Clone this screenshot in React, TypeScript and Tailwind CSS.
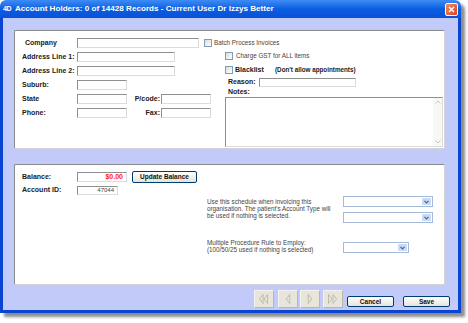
import React from 'react'

const font = { fontFamily: '"Liberation Sans", Arial, sans-serif' }

function Field({ w, h = 10, children, className = '' }: { w: number; h?: number; children?: React.ReactNode; className?: string }) {
  return (
    <div
      className={`bg-white border border-[#8f8f8f] border-r-[#dcdcdc] border-b-[#dcdcdc] flex items-center justify-end pr-[3px] ${className}`}
      style={{ width: w, height: h }}
    >
      {children}
    </div>
  )
}

function Check() {
  return <div className="w-[8px] h-[8px] shrink-0 border border-[#7f9db9] bg-gradient-to-br from-[#dcdcd6] to-white" />
}

function Label({ w = 55, children, right = false }: { w?: number; children: React.ReactNode; right?: boolean }) {
  return (
    <div className={`shrink-0 text-[7px] font-bold text-[#1a1a1a] ${right ? 'text-right pr-[1px]' : ''}`} style={{ width: w }}>
      {children}
    </div>
  )
}

function Combo({ w }: { w: number }) {
  return (
    <div className="h-[11px] bg-white border border-[#a5b9d9] flex justify-end p-[1px]" style={{ width: w }}>
      <div className="w-[9px] h-full bg-[#c9d8f6] rounded-[1px] flex items-center justify-center">
        <svg width="5" height="4" viewBox="0 0 5 4">
          <path d="M0.5 0.8 L2.5 2.8 L4.5 0.8" fill="none" stroke="#4d6185" strokeWidth="1.2" />
        </svg>
      </div>
    </div>
  )
}

function XpButton({ w, h, children }: { w: number; h: number; children: React.ReactNode }) {
  return (
    <div
      className="shrink-0 rounded-[2px] border border-[#003c74] bg-gradient-to-b from-white to-[#e6e4da] flex items-center justify-center text-[6.5px] font-bold text-[#111]"
      style={{ width: w, height: h }}
    >
      {children}
    </div>
  )
}

function NavButton({ kind }: { kind: 'first' | 'prev' | 'next' | 'last' }) {
  const tri = (x: number, dir: 1 | -1) =>
    dir === -1 ? `M${x + 4} 3 L${x} 8 L${x + 4} 13 Z` : `M${x} 3 L${x + 4} 8 L${x} 13 Z`
  let d = ''
  if (kind === 'first') d = tri(5, -1) + ' ' + tri(10, -1)
  if (kind === 'prev') d = tri(8, -1)
  if (kind === 'next') d = tri(8, 1)
  if (kind === 'last') d = tri(5, 1) + ' ' + tri(10, 1)
  return (
    <div className="w-[20px] h-[18px] shrink-0 bg-[#e8e6da] border border-[#f4f3ee] border-r-[#b9b7ab] border-b-[#b9b7ab] flex items-center justify-center">
      <svg width="20" height="16" viewBox="0 0 20 16">
        <path d={d} fill="none" stroke="#b4b2a6" strokeWidth="0.9" />
      </svg>
    </div>
  )
}

export default function App() {
  return (
    <div className="w-[468px] h-[323px] bg-white overflow-hidden" style={font}>
      <div className="w-[461px] h-[313px] flex flex-col rounded-t-[6px] overflow-hidden shadow-[4px_4px_3px_rgba(0,0,0,0.45)]">
        {/* title bar */}
        <div className="h-[18px] shrink-0 flex items-center pl-[3px] pr-[3px] bg-gradient-to-b from-[#3d8cf5] via-[#0b5ee2] to-[#0a50d4]">
          <span className="text-[7px] font-bold text-white w-[11px] tracking-[-0.5px]">4D</span>
          <span className="text-[8.1px] font-bold text-white ml-[1px]">
            Account Holders: 0 of 14428 Records - Current User Dr Izzys Better
          </span>
          <div className="ml-auto w-[13px] h-[13px] rounded-[2px] border border-white bg-gradient-to-br from-[#f08a63] to-[#d9411c] flex items-center justify-center">
            <svg width="7" height="7" viewBox="0 0 7 7">
              <path d="M1 1 L6 6 M6 1 L1 6" stroke="white" strokeWidth="1.4" />
            </svg>
          </div>
        </div>

        {/* body */}
        <div className="flex-1 flex flex-col bg-[#c1caf8] border-x-[3px] border-b-[3px] border-[#0a45d2] pt-[12px] pl-[11px] pr-[8px]">
          {/* panel 1 */}
          <div className="w-[431px] h-[119px] shrink-0 bg-white rounded-[2px] border border-[#8a8a8a] border-r-[#d4d4d4] border-b-[#d4d4d4] pt-[7px] pl-[7px] pr-[1px]">
            <div className="h-[10px] flex items-center">
              <div className="w-[55px] pl-[3px] text-[7px] font-bold text-[#1a1a1a]">Company</div>
              <Field w={122} />
              <div className="ml-[5px]"><Check /></div>
              <span className="ml-[2px] text-[6.3px] text-[#444]">Batch Process Invoices</span>
            </div>
            <div className="flex mt-[4px]">
              {/* left column */}
              <div className="w-[196px] flex flex-col gap-[4px]">
                <div className="h-[10px] flex items-center">
                  <Label>Address Line 1:</Label>
                  <Field w={98} />
                </div>
                <div className="h-[10px] flex items-center">
                  <Label>Address Line 2:</Label>
                  <Field w={98} />
                </div>
                <div className="h-[10px] flex items-center">
                  <Label>Suburb:</Label>
                  <Field w={50} />
                </div>
                <div className="h-[10px] flex items-center">
                  <Label>State</Label>
                  <Field w={50} />
                  <Label w={34} right>P/code:</Label>
                  <Field w={50} />
                </div>
                <div className="h-[10px] flex items-center">
                  <Label>Phone:</Label>
                  <Field w={50} />
                  <Label w={34} right>Fax:</Label>
                  <Field w={50} />
                </div>
              </div>
              {/* right column */}
              <div className="flex-1 flex flex-col ml-[7px]">
                <div className="h-[8px] flex items-center">
                  <Check />
                  <span className="ml-[3px] text-[6.3px] text-[#444]">Charge GST for ALL items</span>
                </div>
                <div className="h-[8px] flex items-center mt-[6px]">
                  <Check />
                  <span className="ml-[2px] w-[40px] text-[7px] font-bold text-[#1a1a1a]">Blacklist</span>
                  <span className="text-[6.3px] font-bold text-[#1a1a1a]">(Don't allow appointments)</span>
                </div>
                <div className="h-[9px] flex items-center mt-[4px] pl-[3px]">
                  <Label w={31}>Reason:</Label>
                  <Field w={97} h={9} />
                </div>
                <div className="h-[10px] flex items-center pl-[3px] text-[7px] font-bold text-[#1a1a1a]">Notes:</div>
                <div className="h-[50px] bg-white border border-[#8f8f8f] border-r-[#dcdcdc] border-b-[#dcdcdc] flex justify-end">
                  <div className="w-[9px] h-full bg-[#f7f7f4] flex flex-col justify-between items-center py-[2px]">
                    <svg width="6" height="4" viewBox="0 0 6 4"><path d="M0.5 3.5 L3 1 L5.5 3.5" fill="none" stroke="#c7c7c0" strokeWidth="1" /></svg>
                    <svg width="6" height="4" viewBox="0 0 6 4"><path d="M0.5 0.5 L3 3 L5.5 0.5" fill="none" stroke="#c7c7c0" strokeWidth="1" /></svg>
                  </div>
                </div>
              </div>
            </div>
          </div>

          {/* panel 2 */}
          <div className="w-[431px] h-[121px] shrink-0 mt-[15px] bg-white rounded-[2px] border border-[#8a8a8a] border-r-[#d4d4d4] border-b-[#d4d4d4] flex">
            <div className="w-[185px] pt-[6px] pl-[7px] flex flex-col">
              <div className="h-[12px] flex items-center">
                <Label>Balance:</Label>
                <Field w={50}><span className="text-[7px] font-bold text-[#ff1a1a]">$0.00</span></Field>
                <div className="ml-[5px]"><XpButton w={65} h={12}>Update Balance</XpButton></div>
              </div>
              <div className="h-[10px] flex items-center mt-[2px]">
                <Label>Account ID:</Label>
                <Field w={41} h={9}><span className="text-[6px] text-[#444]">47044</span></Field>
              </div>
            </div>
            <div className="flex-1 pt-[31px] pl-[7px] flex flex-col">
              <div className="flex">
                <div className="w-[136px] pt-[2px] text-[6.3px] leading-[7px] text-[#444]">
                  Use this schedule when invoicing this<br />
                  organisation. The patient's Account Type will<br />
                  be used if nothing is selected.
                </div>
                <div className="flex flex-col gap-[5px]">
                  <Combo w={90} />
                  <Combo w={90} />
                </div>
              </div>
              <div className="flex mt-[16px]">
                <div className="w-[136px] text-[6.3px] leading-[7px] text-[#444]">
                  Multiple Procedure Rule to Employ:<br />
                  (100/50/25 used if nothing is selected)
                </div>
                <div className="mt-[3px]"><Combo w={66} /></div>
              </div>
            </div>
          </div>

          {/* bottom buttons */}
          <div className="mt-[5px] flex items-end justify-end">
            <NavButton kind="first" />
            <div className="ml-[4px]"><NavButton kind="prev" /></div>
            <div className="ml-[2px]"><NavButton kind="next" /></div>
            <div className="ml-[3px]"><NavButton kind="last" /></div>
            <div className="ml-[4px] mb-[1px]"><XpButton w={47} h={11}>Cancel</XpButton></div>
            <div className="ml-[9px] mb-[1px]"><XpButton w={47} h={11}>Save</XpButton></div>
          </div>
        </div>
      </div>
    </div>
  )
}
